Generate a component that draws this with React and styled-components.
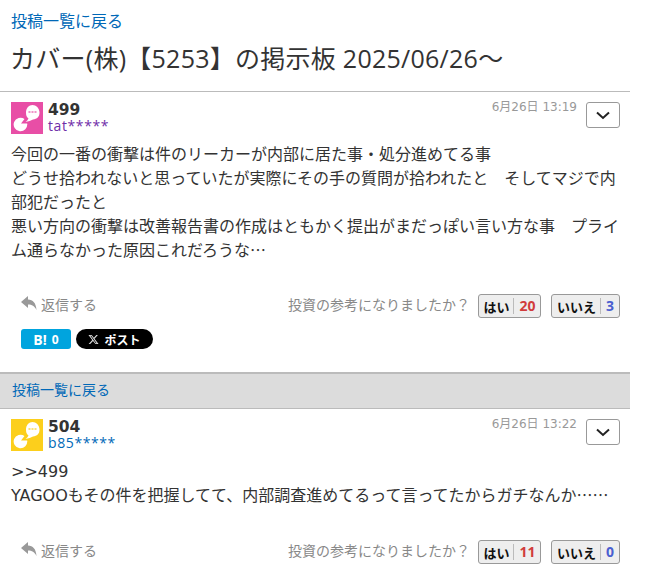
import React from "react";
import styled, { createGlobalStyle } from "styled-components";

const Global = createGlobalStyle`
  html, body { margin: 0; padding: 0; background: #fff; }
  body { font-family: "DejaVu Sans", "Noto Sans CJK JP", sans-serif; color: #333; }
`;
const Page = styled.div`width: 630px; overflow: hidden;`;
const Top = styled.header`padding: 12px 11px 0; height: 78px; box-sizing: border-box;`;
const BackLink = styled.a`color: #0068b7; font-size: 16px; line-height: 20px; display: block; text-decoration: none;`;
const Title = styled.h1`margin: 9px 0 0 -1px; font-size: 25px; line-height: 34px; font-weight: 400; letter-spacing: .26px; color: #333; font-family: "Open Sans", "Noto Sans CJK JP", sans-serif; white-space: nowrap;`;
const Post = styled.article`padding: 10px 10px 0 11px;`;
const First = styled(Post)`border-top: 1px solid #bbb; margin-top: 13px; height: 281px; box-sizing: border-box;`;
const Head = styled.div`display: flex; align-items: flex-start; height: 32px;`;
const Avatar = styled.svg`width: 32px; height: 32px; flex: none;`;
const Who = styled.div`margin-left: 5px; flex: 1; display: flex; flex-direction: column;`;
const Num = styled.span`font-size: 15.500px; font-weight: 700; line-height: 15px; padding-top: 1px; color: #333;`;
const User = styled.span`font-size: 14px; line-height: 16px; color: ${p => p.$c}; font-family: "Open Sans", sans-serif; letter-spacing: .6px;`;
const Date = styled.span`font-size: 12px; line-height: 14px; color: #999; margin: -2px 9px 0 0;`;
const Menu = styled.button`width: 34px; height: 26px; border: 1px solid #999; border-radius: 3px; background: #fff; padding: 0; display: flex; align-items: center; justify-content: center;`;
const Body = styled.p`margin: 9px 0 0; font-size: 16px; line-height: 24px; color: #333; width: 610px;`;
const Dots = styled.span`font-family: "Noto Sans CJK JP", sans-serif; line-height: 0;`;
const Actions = styled.div`display: flex; align-items: center; padding: 0 0 0 10px; height: 26px; margin-top: ${p => p.$mt}px;`;
const Reply = styled.span`display: flex; align-items: center; gap: 4px; font-size: 14px; color: #888; flex: 1; padding-bottom: 5px;`;
const Question = styled.span`font-size: 14px; color: #888; margin-right: 8px; padding-bottom: 5px;`;
const Vote = styled.span`display: inline-flex; align-items: center; height: 24px; box-sizing: border-box; border: 1px solid #999; border-radius: 3px; background: #eee; padding: 0 5px 0 4.500px; font-size: 13px; font-weight: 700; color: #111; margin-left: ${p => p.$ml || 0}px;`;
const Count = styled.span`margin-left: 4px; padding-left: 5px; border-left: 1px solid #bbb; color: ${p => p.$c}; line-height: 16px; font-size: 14px; font-family: "Open Sans", sans-serif;`;
const Shares = styled.div`display: flex; gap: 5px; margin: 10px 0 0 10px;`;
const Hatena = styled.span`width: 50px; height: 20px; background: #00a4de; border-radius: 3px; color: #fff; font-size: 12px; font-weight: 700; display: flex; align-items: center; justify-content: center; gap: 5px; font-family: "Open Sans", sans-serif;`;
const HatenaMark = styled.span`font-size: 14px;`;
const XPost = styled.span`width: 77px; height: 20px; background: #000; border-radius: 10px; color: #fff; font-size: 12px; font-weight: 700; display: flex; align-items: center; justify-content: center; gap: 5px;`;
const Band = styled.div`background: #dcdcdc; border-top: 2px solid #bbb; border-bottom: 1px solid #bbb; height: 37px; box-sizing: border-box; padding: 0 12px 2px; display: flex; align-items: center;`;
const BandLink = styled(BackLink)`font-size: 14px;`;

const Icon = ({ bg }) => (
  <Avatar viewBox="0 0 32 32">
    <rect width="32" height="32" fill={bg} />
    <path d="M16.200 21.500A6.800 6.800 0 1 1 13.500 17L10 21.500z" fill="#fff" />
    <path d="M15 10.500C15 6 18 3 21.500 3S28.500 6 28.500 10.500 26 17 22 17.500q-3 1.500-7.500 2.500q2-1.500 3-3.500Q15 15 15 10.500z" fill="#fff" />
    <g fill={bg} opacity=".6"><rect x="17.500" y="9" width="2" height="2" /><rect x="20.500" y="9" width="2" height="2" /><rect x="23.500" y="9" width="2" height="2" /></g>
  </Avatar>
);
const Chevron = () => (
  <svg width="14" height="9" viewBox="0 0 14 9"><path d="M1 1.500l6 5.500 6-5.500" fill="none" stroke="#222" strokeWidth="2" /></svg>
);
const ReplyIcon = () => (
  <svg width="16" height="15" viewBox="0 0 16 15"><path d="M0 6L7 0v3.500c5 0 8 3.500 8.500 10.500C13.500 10 11 8.500 7 8.500V12z" fill="#999" /></svg>
);
const XLogo = () => (
  <svg width="11" height="11" viewBox="0 0 24 24"><path d="M18.200 2h3.400l-7.400 8.500L23 22h-6.800l-5.300-7-6.100 7H1.400l7.900-9.100L1 2h7l4.800 6.400zM17 20h1.900L7 3.900H5z" fill="#ddd" /></svg>
);
const Feedback = ({ yes, no, mt }) => (
  <Actions $mt={mt}>
    <Reply><ReplyIcon />返信する</Reply>
    <Question>投資の参考になりましたか？</Question>
    <Vote>はい<Count $c="#d13c3c">{yes}</Count></Vote>
    <Vote $ml={10}>いいえ<Count $c="#4a5fd0">{no}</Count></Vote>
  </Actions>
);

export default function App() {
  return (
    <Page>
      <Global />
      <Top>
        <BackLink>投稿一覧に戻る</BackLink>
        <Title>カバー(株)【5253】の掲示板 2025/06/26〜</Title>
      </Top>
      <First>
        <Head>
          <Icon bg="#e84ea6" />
          <Who><Num>499</Num><User $c="#6f2da8">tat*****</User></Who>
          <Date>6月26日 13:19</Date>
          <Menu><Chevron /></Menu>
        </Head>
        <Body>
          今回の一番の衝撃は件のリーカーが内部に居た事・処分進めてる事<br />
          どうせ拾われないと思っていたが実際にその手の質問が拾われたと　そしてマジで内部犯だったと<br />
          悪い方向の衝撃は改善報告書の作成はともかく提出がまだっぽい言い方な事　プライム通らなかった原因これだろうな<Dots>…</Dots>
        </Body>
        <Feedback yes="20" no="3" mt={30} />
        <Shares>
          <Hatena><HatenaMark>B!</HatenaMark><span>0</span></Hatena>
          <XPost><XLogo /><span>ポスト</span></XPost>
        </Shares>
      </First>
      <Band><BandLink>投稿一覧に戻る</BandLink></Band>
      <Post>
        <Head>
          <Icon bg="#fccf1c" />
          <Who><Num>504</Num><User $c="#0068b7">b85*****</User></Who>
          <Date>6月26日 13:22</Date>
          <Menu><Chevron /></Menu>
        </Head>
        <Body>
          &gt;&gt;499<br />
          YAGOOもその件を把握してて、内部調査進めてるって言ってたからガチなんか<Dots>……</Dots>
        </Body>
        <Feedback yes="11" no="0" mt={31} />
      </Post>
    </Page>
  );
}
